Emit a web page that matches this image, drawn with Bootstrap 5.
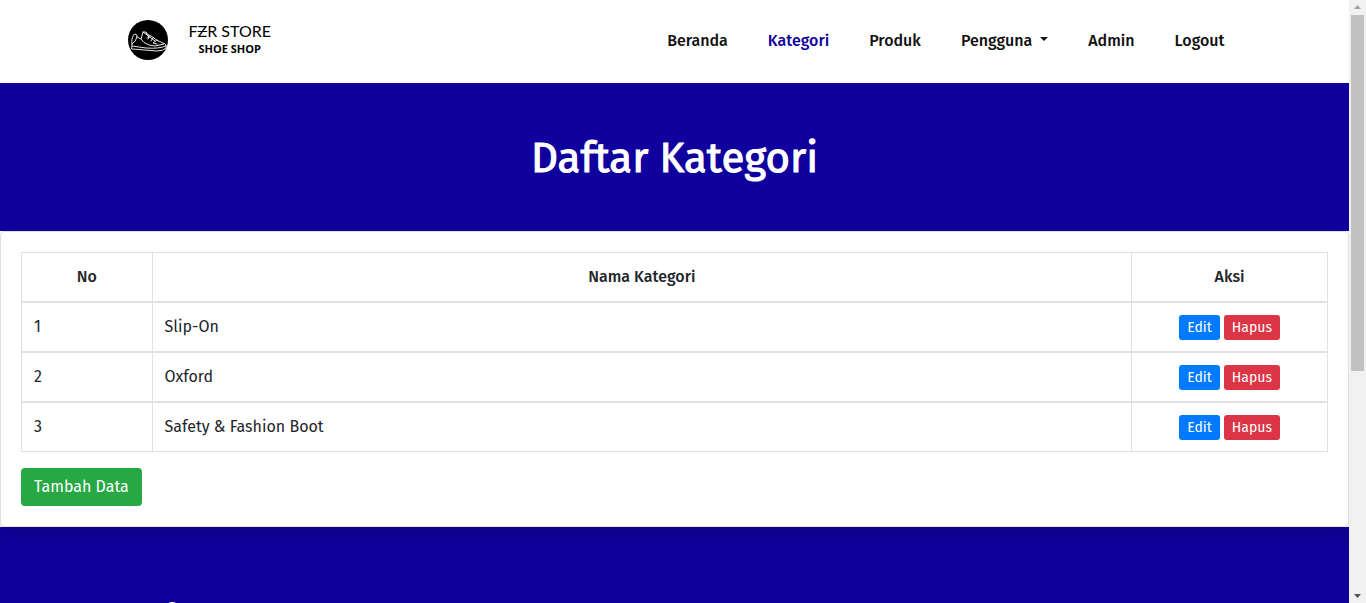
<!DOCTYPE html>
<html lang="id">
<head>
<meta charset="utf-8">
<meta name="viewport" content="width=device-width, initial-scale=1">
<title>Daftar Kategori - FZR Store</title>
<link href="https://cdn.jsdelivr.net/npm/bootstrap@5.3.0/dist/css/bootstrap.min.css" rel="stylesheet">
<style>
  :root { --brand: #10009d; --line: #dee2e6; }
  body { font-family: "Fira Sans", "Noto Sans", sans-serif; font-size: 16px; line-height: 24px; color: #212529; background: #fff; }
  .page-view { min-width: 0; }
  .site-nav { padding: 20px 0 22px; }
  .site-nav .container, .site-footer .container { max-width: 1140px; }
  .site-nav .container { padding: 0 0 0 23px; }
  .brand-link { gap: 20px; }
  .brand-words { text-align: center; color: #000; padding-bottom: 4px; }
  .brand-name { font-family: Lato, sans-serif; font-size: 16px; line-height: 20px; }
  .brand-sub { font-family: "Open Sans", sans-serif; font-weight: 700; font-size: 11px; line-height: 15px; }
  .barred { text-decoration: line-through; text-decoration-thickness: 1px; }
  .site-nav .nav-link { padding: 8px 20px; font-weight: 500; line-height: 24px; color: #111; }
  .site-nav .nav-link.active { color: var(--brand); }
  .site-nav .dropdown-toggle::after { margin-left: 8px; }
  .banner { background: var(--brand); color: #fff; padding: 49px 0 47px; }
  .banner h1 { font-size: 42px; line-height: 52px; font-weight: 400; -webkit-text-stroke: 1px #fff; margin: 0; }
  .list-card { border-color: #dfdfdf; border-radius: 4px; box-shadow: 0 8px 16px rgba(0,0,0,.15); z-index: 1; }
  .list-card .card-body { padding: 20px; }
  .cat-table { border-color: var(--line); color: #212529; margin-bottom: 16px; }
  .cat-table th, .cat-table td { padding: 12px; line-height: 24px; border: 1px solid var(--line); }
  .cat-table th { font-weight: 500; text-align: center; }
  .cat-table tbody td { border-top-width: 2px; padding-bottom: 11px; }
  .col-no { width: 10%; } .col-act { width: 15%; }
  .btn { border: 0; border-radius: 4px; font-weight: 400; color: #fff; }
  .btn-row { font-size: 14px; line-height: 21px; padding: 2px 8px; border-radius: 3px; }
  .btn-edit { background: #007bff; } .btn-del { background: #dc3545; }
  .btn-add { background: #28a745; font-size: 16px; line-height: 24px; padding: 7px 13px; }
  .site-footer { background: var(--brand); color: #fff; padding: 69px 0; }
  .site-footer .container { padding-left: 40px; }
  .site-footer h2 { font-size: 24px; line-height: 32px; font-weight: 500; margin: 0; }
  .scroll-rail { width: 17px; background: #f1f1f1; }
  .scroll-rail svg { display: block; }
  .scroll-thumb { width: 13px; height: 59%; background: #c1c1c1; }
</style>
</head>
<body>
<div class="d-flex vh-100 overflow-hidden">
  <div class="page-view flex-grow-1 overflow-hidden">
    <header class="site-nav">
      <div class="container d-flex align-items-center justify-content-between">
        <a href="#" class="brand-link d-flex align-items-center text-decoration-none">
          <svg width="41" height="41" viewBox="0 0 41 41" aria-hidden="true">
            <circle cx="20" cy="20" r="20" fill="#000"/>
            <g fill="none" stroke="#fff" stroke-width=".9" stroke-linejoin="round" stroke-linecap="round">
              <path d="M4 25C3 20 5 14 7 14q2 0 2 3l4 2 2-7 3 0q1 3 5 4 6 5 12 7 4 1 3 5-3 3-9 3L4 29z"/>
              <path d="M4 26l14 2q13 1 20-2M9 17q-1 5-5 7M13 19q2 4 8 6l6 1 9-2M15 12l12 9M18 13l3 4-2 1M22 16l-2 3M25 18l-2 3M29 20l-4 3 4 1"/>
            </g>
          </svg>
          <span class="brand-words">
            <span class="brand-name d-block">F<span class="barred">Z</span>R STORE</span>
            <span class="brand-sub d-block">SHOE SHOP</span>
          </span>
        </a>
        <nav class="nav flex-nowrap" aria-label="Menu utama">
          <a class="nav-link" href="#">Beranda</a>
          <a class="nav-link active" aria-current="page" href="#">Kategori</a>
          <a class="nav-link" href="#">Produk</a>
          <a class="nav-link dropdown-toggle" href="#" role="button" data-bs-toggle="dropdown" aria-expanded="false">Pengguna</a>
          <a class="nav-link" href="#">Admin</a>
          <a class="nav-link" href="#">Logout</a>
        </nav>
      </div>
    </header>
    <section class="banner text-center"><h1>Daftar Kategori</h1></section>
    <main class="card list-card">
      <div class="card-body">
        <table class="table cat-table">
          <thead><tr><th class="col-no" scope="col">No</th><th scope="col">Nama Kategori</th><th class="col-act" scope="col">Aksi</th></tr></thead>
          <tbody>
            <tr><td>1</td><td>Slip-On</td><td><div class="d-flex justify-content-center gap-1"><button type="button" class="btn btn-row btn-edit">Edit</button><button type="button" class="btn btn-row btn-del">Hapus</button></div></td></tr>
            <tr><td>2</td><td>Oxford</td><td><div class="d-flex justify-content-center gap-1"><button type="button" class="btn btn-row btn-edit">Edit</button><button type="button" class="btn btn-row btn-del">Hapus</button></div></td></tr>
            <tr><td>3</td><td>Safety &amp; Fashion Boot</td><td><div class="d-flex justify-content-center gap-1"><button type="button" class="btn btn-row btn-edit">Edit</button><button type="button" class="btn btn-row btn-del">Hapus</button></div></td></tr>
          </tbody>
        </table>
        <button type="button" class="btn btn-add">Tambah Data</button>
      </div>
    </main>
    <footer class="site-footer"><div class="container"><h2>Info</h2></div></footer>
  </div>
  <div class="scroll-rail d-flex flex-column align-items-center flex-shrink-0" aria-hidden="true">
    <svg class="flex-shrink-0" width="17" height="15"><path d="M5 9h7L8.500 5z" fill="#a3a3a3"/></svg>
    <div class="scroll-thumb flex-shrink-0"></div>
    <svg class="mt-auto flex-shrink-0" width="17" height="15"><path d="M5 6h7L8.500 10z" fill="#505050"/></svg>
  </div>
</div>
<script src="https://cdn.jsdelivr.net/npm/bootstrap@5.3.0/dist/js/bootstrap.bundle.min.js"></script>
</body>
</html>
